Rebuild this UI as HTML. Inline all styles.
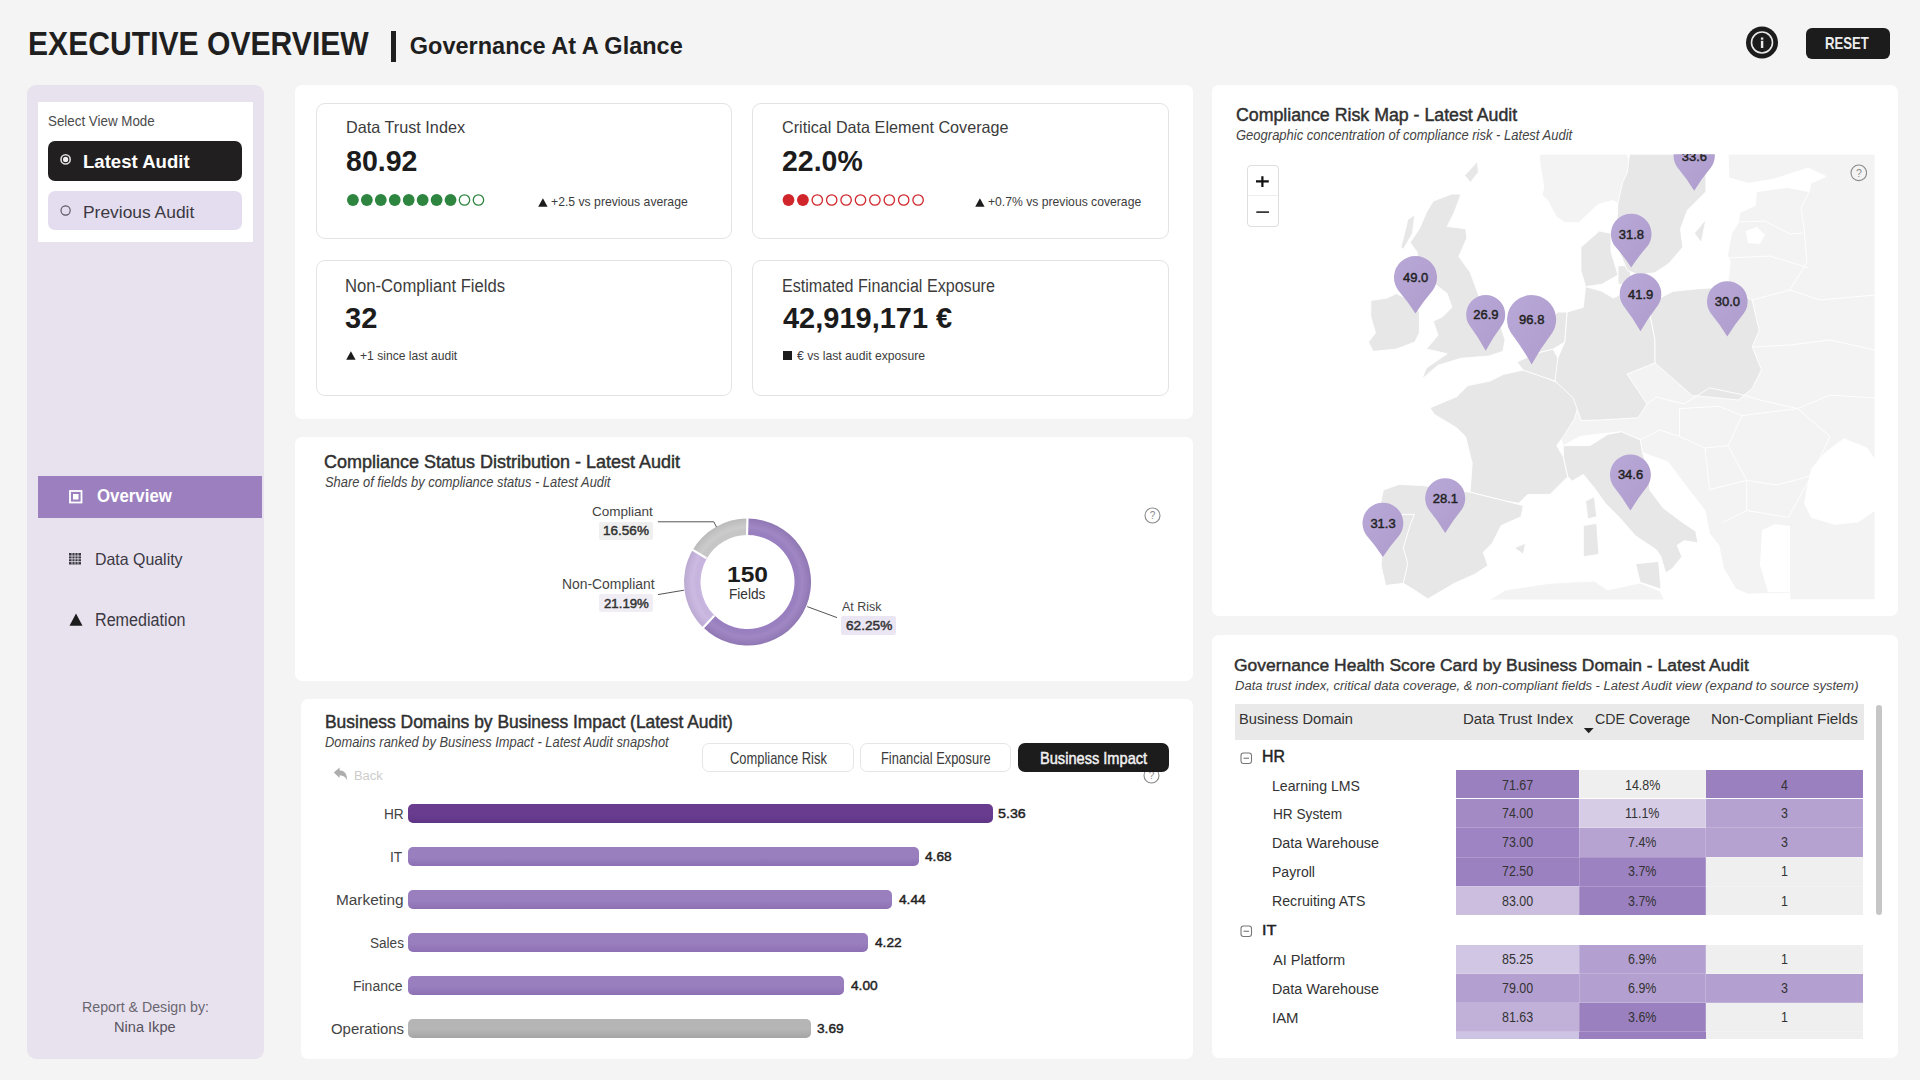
<!DOCTYPE html>
<html><head><meta charset="utf-8"><title>Executive Overview</title>
<style>
html,body{margin:0;padding:0;}
body{width:1920px;height:1080px;overflow:hidden;background:#f4f4f4;position:relative;font-family:"Liberation Sans",sans-serif;}
.b{position:absolute;}
.t{position:absolute;white-space:nowrap;}
</style></head><body>
<div class="b" style="left:27px;top:85px;width:237px;height:974px;background:#e8e2ef;border-radius:9px;"></div>
<div class="b" style="left:38px;top:102px;width:215px;height:140px;background:#ffffff;border-radius:0px;"></div>
<div class="b" style="left:48px;top:140.5px;width:194px;height:40px;background:#221f20;border-radius:7px;"></div>
<div class="b" style="left:48px;top:191px;width:194px;height:39px;background:#e4ddef;border-radius:7px;"></div>
<div class="b" style="left:38px;top:476px;width:224px;height:41.5px;background:#9b7fbf;border-radius:0px;"></div>
<div class="b" style="left:295px;top:85px;width:898px;height:334px;background:#ffffff;border-radius:7px;"></div>
<div class="b" style="left:315.5px;top:102.5px;width:416.5px;height:136.5px;background:#ffffff;border-radius:9px;border:1px solid #e3e3e3;box-sizing:border-box;"></div>
<div class="b" style="left:752px;top:102.5px;width:416.5px;height:136.5px;background:#ffffff;border-radius:9px;border:1px solid #e3e3e3;box-sizing:border-box;"></div>
<div class="b" style="left:315.5px;top:259.5px;width:416.5px;height:136.5px;background:#ffffff;border-radius:9px;border:1px solid #e3e3e3;box-sizing:border-box;"></div>
<div class="b" style="left:752px;top:259.5px;width:416.5px;height:136.5px;background:#ffffff;border-radius:9px;border:1px solid #e3e3e3;box-sizing:border-box;"></div>
<div class="b" style="left:295px;top:437px;width:898px;height:244px;background:#ffffff;border-radius:7px;"></div>
<div class="b" style="left:301px;top:699px;width:892px;height:360px;background:#ffffff;border-radius:7px;"></div>
<div class="b" style="left:1212px;top:85px;width:686px;height:531px;background:#ffffff;border-radius:7px;"></div>
<div class="b" style="left:1212px;top:635px;width:686px;height:423px;background:#ffffff;border-radius:7px;"></div>
<div class="t" style="left:28.18px;top:25px;font-size:33.0px;line-height:37px;color:#1f1f1f;font-weight:700;transform:scaleX(0.9124);transform-origin:0 0;">EXECUTIVE OVERVIEW</div>
<div class="b" style="left:391px;top:31px;width:4.5px;height:30.5px;background:#1f1f1f;border-radius:0px;"></div>
<div class="t" style="left:409.80px;top:33px;font-size:23.5px;line-height:26px;color:#1f1f1f;font-weight:700;">Governance At A Glance</div>
<svg class="b" style="left:1745px;top:26px" width="34" height="34" viewBox="0 0 34 34"><circle cx="17" cy="16.5" r="16" fill="#1c1c1c"/><circle cx="17" cy="16.5" r="10.5" fill="none" stroke="#e8e8e8" stroke-width="1.6"/><rect x="15.9" y="11.5" width="2.4" height="2.2" fill="#e8e8e8"/><rect x="15.9" y="14.8" width="2.4" height="7.2" fill="#e8e8e8"/></svg>
<div class="b" style="left:1805.5px;top:28px;width:84px;height:31px;background:#1c1c1c;border-radius:6px;"></div>
<div class="t" style="left:1824.97px;top:35px;font-size:15.75px;line-height:17px;color:#ececec;font-weight:700;transform:scaleX(0.8346);transform-origin:0 0;">RESET</div>
<div class="t" style="left:47.80px;top:113px;font-size:14.0px;line-height:16px;color:#4a4a4a;transform:scaleX(0.9545);transform-origin:0 0;">Select View Mode</div>
<svg class="b" style="left:59px;top:153px" width="14" height="14"><circle cx="6.6" cy="6.4" r="4.6" fill="#221f20" stroke="#dcdcdc" stroke-width="1.6"/><circle cx="6.6" cy="6.4" r="2.6" fill="#f0f0f0"/></svg>
<div class="t" style="left:83.42px;top:151px;font-size:19.0px;line-height:21px;color:#ffffff;font-weight:700;transform:scaleX(0.9778);transform-origin:0 0;">Latest Audit</div>
<svg class="b" style="left:59px;top:203.5px" width="14" height="14"><circle cx="6.6" cy="6.5" r="4.6" fill="none" stroke="#55505c" stroke-width="1.1"/></svg>
<div class="t" style="left:83.39px;top:202px;font-size:17.25px;line-height:20px;color:#3b3842;transform:scaleX(1.0092);transform-origin:0 0;">Previous Audit</div>
<svg class="b" style="left:69px;top:489.5px" width="14" height="14"><rect x="1" y="1" width="11.5" height="11.5" fill="none" stroke="#ffffff" stroke-width="1.8"/><rect x="4" y="4" width="5.5" height="5.5" fill="#ffffff"/></svg>
<div class="t" style="left:96.58px;top:485px;font-size:18.25px;line-height:21px;color:#ffffff;font-weight:700;transform:scaleX(0.9225);transform-origin:0 0;">Overview</div>
<svg class="b" style="left:69px;top:553px" width="13" height="12"><rect x="0" y="0" width="12" height="11.5" fill="#3a3840"/><path d="M0 3H12M0 5.8H12M0 8.6H12M3 0V11.5M6 0V11.5M9 0V11.5" stroke="#e8e2ef" stroke-width="0.8"/></svg>
<div class="t" style="left:95.24px;top:550px;font-size:16.5px;line-height:18px;color:#3b3842;transform:scaleX(0.9644);transform-origin:0 0;">Data Quality</div>
<svg class="b" style="left:68.5px;top:613px" width="14" height="13"><path d="M7 0.5L13.5 12.8H0.5Z" fill="#1c1c1c"/></svg>
<div class="t" style="left:95.28px;top:610px;font-size:17.5px;line-height:20px;color:#3b3842;transform:scaleX(0.9219);transform-origin:0 0;">Remediation</div>
<div class="t" style="left:81.89px;top:999px;font-size:14.0px;line-height:16px;color:#6a6670;transform:scaleX(1.0130);transform-origin:0 0;">Report &amp; Design by:</div>
<div class="t" style="left:113.96px;top:1019px;font-size:14.0px;line-height:16px;color:#57535d;transform:scaleX(1.0414);transform-origin:0 0;">Nina Ikpe</div>
<div class="t" style="left:345.72px;top:118px;font-size:16.5px;line-height:18px;color:#3c3c3c;transform:scaleX(0.9833);transform-origin:0 0;">Data Trust Index</div>
<div class="t" style="left:345.72px;top:145px;font-size:29.0px;line-height:32px;color:#1c1c1c;font-weight:700;transform:scaleX(0.9845);transform-origin:0 0;">80.92</div>
<svg class="b" style="left:340px;top:192.4px" width="160" height="16"><circle cx="12.90" cy="8" r="5.9" fill="#2e8540"/><circle cx="26.85" cy="8" r="5.9" fill="#2e8540"/><circle cx="40.80" cy="8" r="5.9" fill="#2e8540"/><circle cx="54.75" cy="8" r="5.9" fill="#2e8540"/><circle cx="68.70" cy="8" r="5.9" fill="#2e8540"/><circle cx="82.65" cy="8" r="5.9" fill="#2e8540"/><circle cx="96.60" cy="8" r="5.9" fill="#2e8540"/><circle cx="110.55" cy="8" r="5.9" fill="#2e8540"/><circle cx="124.50" cy="8" r="5.2" fill="none" stroke="#2e8540" stroke-width="1.3"/><circle cx="138.45" cy="8" r="5.2" fill="none" stroke="#2e8540" stroke-width="1.3"/></svg>
<svg class="b" style="left:537.5px;top:197.5px" width="10" height="9"><path d="M4.9 0.2L9.6 8.7H0.2Z" fill="#1c1c1c"/></svg>
<div class="t" style="left:550.54px;top:194px;font-size:12.75px;line-height:15px;color:#3c3c3c;transform:scaleX(0.9574);transform-origin:0 0;">+2.5 vs previous average</div>
<div class="t" style="left:781.52px;top:118px;font-size:16.5px;line-height:18px;color:#3c3c3c;transform:scaleX(0.9804);transform-origin:0 0;">Critical Data Element Coverage</div>
<div class="t" style="left:781.52px;top:145px;font-size:29.0px;line-height:32px;color:#1c1c1c;font-weight:700;transform:scaleX(0.9815);transform-origin:0 0;">22.0%</div>
<svg class="b" style="left:776px;top:192.4px" width="160" height="16"><circle cx="12.50" cy="8" r="5.9" fill="#d0262b"/><circle cx="26.90" cy="8" r="5.9" fill="#d0262b"/><circle cx="41.30" cy="8" r="5.2" fill="none" stroke="#d0262b" stroke-width="1.3"/><circle cx="55.70" cy="8" r="5.2" fill="none" stroke="#d0262b" stroke-width="1.3"/><circle cx="70.10" cy="8" r="5.2" fill="none" stroke="#d0262b" stroke-width="1.3"/><circle cx="84.50" cy="8" r="5.2" fill="none" stroke="#d0262b" stroke-width="1.3"/><circle cx="98.90" cy="8" r="5.2" fill="none" stroke="#d0262b" stroke-width="1.3"/><circle cx="113.30" cy="8" r="5.2" fill="none" stroke="#d0262b" stroke-width="1.3"/><circle cx="127.70" cy="8" r="5.2" fill="none" stroke="#d0262b" stroke-width="1.3"/><circle cx="142.10" cy="8" r="5.2" fill="none" stroke="#d0262b" stroke-width="1.3"/></svg>
<svg class="b" style="left:974.5px;top:197.5px" width="10" height="9"><path d="M4.9 0.2L9.6 8.7H0.2Z" fill="#1c1c1c"/></svg>
<div class="t" style="left:987.55px;top:194px;font-size:12.75px;line-height:15px;color:#3c3c3c;transform:scaleX(0.9541);transform-origin:0 0;">+0.7% vs previous coverage</div>
<div class="t" style="left:345.27px;top:276px;font-size:18.0px;line-height:20px;color:#3c3c3c;transform:scaleX(0.9251);transform-origin:0 0;">Non-Compliant Fields</div>
<div class="t" style="left:345.42px;top:301px;font-size:29.75px;line-height:33px;color:#1c1c1c;font-weight:700;transform:scaleX(0.9774);transform-origin:0 0;">32</div>
<svg class="b" style="left:346px;top:351px" width="10" height="9"><path d="M4.9 0.2L9.6 8.7H0.2Z" fill="#1c1c1c"/></svg>
<div class="t" style="left:359.57px;top:348px;font-size:13.0px;line-height:15px;color:#3c3c3c;transform:scaleX(0.9311);transform-origin:0 0;">+1 since last audit</div>
<div class="t" style="left:781.61px;top:276px;font-size:18.0px;line-height:20px;color:#3c3c3c;transform:scaleX(0.8941);transform-origin:0 0;">Estimated Financial Exposure</div>
<div class="t" style="left:782.50px;top:301px;font-size:29.75px;line-height:33px;color:#1c1c1c;font-weight:700;transform:scaleX(0.9740);transform-origin:0 0;">42,919,171 €</div>
<div class="b" style="left:783px;top:351px;width:8.5px;height:8.5px;background:#1c1c1c;border-radius:0px;"></div>
<div class="t" style="left:797.00px;top:348px;font-size:13.0px;line-height:15px;color:#3c3c3c;transform:scaleX(0.9375);transform-origin:0 0;">€ vs last audit exposure</div>
<div class="t" style="left:324.37px;top:452px;font-size:17.5px;line-height:20px;color:#303030;-webkit-text-stroke:0.45px #303030;transform:scaleX(1.0277);transform-origin:0 0;">Compliance Status Distribution - Latest Audit</div>
<div class="t" style="left:324.51px;top:474px;font-size:14.5px;line-height:16px;color:#444444;font-style:italic;transform:scaleX(0.8891);transform-origin:0 0;">Share of fields by compliance status - Latest Audit</div>
<svg class="b" style="left:1144.1px;top:506.79999999999995px" width="17.0" height="17.0" viewBox="0 0 17.0 17.0"><circle cx="8.5" cy="8.5" r="7.5" fill="none" stroke="#8a8a8a" stroke-width="1.1"/><text x="8.5" y="12.1" text-anchor="middle" font-family="Liberation Sans" font-size="10" fill="#8a8a8a">?</text></svg>
<svg class="b" style="left:0;top:0" width="1920" height="1080" viewBox="0 0 1920 1080"><defs><radialGradient id="dg" cx="747.5" cy="582" r="63.5" gradientUnits="userSpaceOnUse"><stop offset="0.74" stop-color="#000" stop-opacity="0"/><stop offset="0.86" stop-color="#fff" stop-opacity="0.06"/><stop offset="1" stop-color="#000" stop-opacity="0.07"/></radialGradient></defs><path d="M747.50,518.50 A63.5,63.5 0 1 1 703.31,627.60 L714.79,615.75 A47,47 0 1 0 747.50,535.00 Z" fill="#9a80c1"/><path d="M703.31,627.60 A63.5,63.5 0 0 1 692.72,549.88 L706.96,558.23 A47,47 0 0 0 714.79,615.75 Z" fill="#c9b6e1"/><path d="M692.72,549.88 A63.5,63.5 0 0 1 747.50,518.50 L747.50,535.00 A47,47 0 0 0 706.96,558.23 Z" fill="#c8c8c8"/><circle cx="747.5" cy="582" r="63.5" fill="url(#dg)"/><line x1="747.00" y1="535.00" x2="747.50" y2="517.50" stroke="#fff" stroke-width="2.2"/><line x1="714.29" y1="615.75" x2="702.61" y2="628.32" stroke="#fff" stroke-width="2.2"/><line x1="706.46" y1="558.23" x2="691.86" y2="549.38" stroke="#fff" stroke-width="2.2"/><polyline points="657.9,521.8 713.8,521.8 716.5,527" fill="none" stroke="#555" stroke-width="1"/><polyline points="657.9,594.6 684,590.2" fill="none" stroke="#555" stroke-width="1"/><polyline points="807.2,606.6 837,617.6" fill="none" stroke="#555" stroke-width="1"/></svg>
<div class="t" style="left:727.31px;top:562px;font-size:22.5px;line-height:25px;color:#1c1c1c;font-weight:700;transform:scaleX(1.0917);transform-origin:0 0;">150</div>
<div class="t" style="left:729.06px;top:586px;font-size:14.5px;line-height:16px;color:#333333;transform:scaleX(0.9405);transform-origin:0 0;">Fields</div>
<div class="t" style="left:592.36px;top:504px;font-size:13.0px;line-height:15px;color:#444444;transform:scaleX(1.0397);transform-origin:0 0;">Compliant</div>
<div class="b" style="left:599px;top:521.8px;width:54px;height:18px;background:#efefef;border-radius:2px;"></div>
<div class="t" style="left:602.94px;top:523px;font-size:12.75px;line-height:15px;color:#333333;-webkit-text-stroke:0.45px #333333;transform:scaleX(1.0619);transform-origin:0 0;">16.56%</div>
<div class="t" style="left:561.51px;top:576px;font-size:14.0px;line-height:16px;color:#444444;transform:scaleX(0.9913);transform-origin:0 0;">Non-Compliant</div>
<div class="b" style="left:599px;top:594px;width:54px;height:18.3px;background:#f0eef4;border-radius:2px;"></div>
<div class="t" style="left:604.00px;top:596px;font-size:12.75px;line-height:15px;color:#333333;-webkit-text-stroke:0.45px #333333;transform:scaleX(1.0372);transform-origin:0 0;">21.19%</div>
<div class="t" style="left:841.90px;top:599px;font-size:13.25px;line-height:15px;color:#444444;transform:scaleX(0.9405);transform-origin:0 0;">At Risk</div>
<div class="b" style="left:841px;top:616.2px;width:55px;height:18.7px;background:#ebe6f3;border-radius:2px;"></div>
<div class="t" style="left:845.50px;top:618px;font-size:12.75px;line-height:15px;color:#333333;-webkit-text-stroke:0.45px #333333;transform:scaleX(1.0698);transform-origin:0 0;">62.25%</div>
<div class="t" style="left:324.70px;top:712px;font-size:17.5px;line-height:20px;color:#303030;-webkit-text-stroke:0.45px #303030;transform:scaleX(0.9958);transform-origin:0 0;">Business Domains by Business Impact (Latest Audit)</div>
<div class="t" style="left:324.84px;top:733px;font-size:15.0px;line-height:17px;color:#444444;font-style:italic;transform:scaleX(0.8580);transform-origin:0 0;">Domains ranked by Business Impact - Latest Audit snapshot</div>
<svg class="b" style="left:333px;top:766.5px" width="16" height="15" viewBox="0 0 16 15"><path d="M0.8 5.6 L6.6 0.4 V3.2 Q14.2 3.4 14.2 13.6 Q12.4 8.4 6.6 8.2 V11Z" fill="#adadad"/></svg>
<div class="t" style="left:354.22px;top:769px;font-size:12.0px;line-height:14px;color:#cccccc;transform:scaleX(1.0769);transform-origin:0 0;">Back</div>
<svg class="b" style="left:1143.2px;top:766.9px" width="17.0" height="17.0" viewBox="0 0 17.0 17.0"><circle cx="8.5" cy="8.5" r="7.5" fill="none" stroke="#8a8a8a" stroke-width="1.1"/><text x="8.5" y="12.1" text-anchor="middle" font-family="Liberation Sans" font-size="10" fill="#8a8a8a">?</text></svg>
<div class="b" style="left:702px;top:743px;width:151.6px;height:28.6px;background:#ffffff;border-radius:7px;border:1px solid #e6e6e6;box-sizing:border-box;"></div>
<div class="b" style="left:859.7px;top:743px;width:151.5px;height:28.6px;background:#ffffff;border-radius:7px;border:1px solid #e6e6e6;box-sizing:border-box;"></div>
<div class="b" style="left:1017.8px;top:743px;width:151.6px;height:28.6px;background:#1c1c1c;border-radius:7px;"></div>
<div class="t" style="left:729.58px;top:750px;font-size:15.75px;line-height:17px;color:#3a3a3a;transform:scaleX(0.8197);transform-origin:0 0;">Compliance Risk</div>
<div class="t" style="left:881.18px;top:750px;font-size:15.75px;line-height:17px;color:#3a3a3a;transform:scaleX(0.8182);transform-origin:0 0;">Financial Exposure</div>
<div class="t" style="left:1039.57px;top:750px;font-size:15.75px;line-height:17px;color:#f2f2f2;-webkit-text-stroke:0.45px #f2f2f2;transform:scaleX(0.9270);transform-origin:0 0;">Business Impact</div>
<div class="b" style="left:407.8px;top:804.2px;width:585.0px;height:18.6px;border-radius:5px;background:linear-gradient(180deg,#693c90 0%,#693c90 55%,#5f3585 100%);"></div>
<div class="t" style="left:383.52px;top:805px;font-size:15.5px;line-height:17px;color:#444444;transform:scaleX(0.8810);transform-origin:0 0;">HR</div>
<div class="t" style="left:998.39px;top:806px;font-size:13.5px;line-height:15px;color:#222222;-webkit-text-stroke:0.45px #222222;transform:scaleX(1.0560);transform-origin:0 0;">5.36</div>
<div class="b" style="left:407.8px;top:847.2px;width:510.8px;height:18.6px;border-radius:5px;background:linear-gradient(180deg,#9a7fbf 0%,#9a7fbf 55%,#8c70b3 100%);"></div>
<div class="t" style="left:390.41px;top:848px;font-size:15.5px;line-height:17px;color:#444444;transform:scaleX(0.8923);transform-origin:0 0;">IT</div>
<div class="t" style="left:925.22px;top:849px;font-size:13.5px;line-height:15px;color:#222222;-webkit-text-stroke:0.45px #222222;transform:scaleX(1.0154);transform-origin:0 0;">4.68</div>
<div class="b" style="left:407.8px;top:890.2px;width:484.6px;height:18.6px;border-radius:5px;background:linear-gradient(180deg,#9a7fbf 0%,#9a7fbf 55%,#8c70b3 100%);"></div>
<div class="t" style="left:336.41px;top:891px;font-size:15.5px;line-height:17px;color:#444444;transform:scaleX(0.9924);transform-origin:0 0;">Marketing</div>
<div class="t" style="left:899.03px;top:892px;font-size:13.5px;line-height:15px;color:#222222;-webkit-text-stroke:0.45px #222222;transform:scaleX(1.0154);transform-origin:0 0;">4.44</div>
<div class="b" style="left:407.8px;top:933.2px;width:460.6px;height:18.6px;border-radius:5px;background:linear-gradient(180deg,#9a7fbf 0%,#9a7fbf 55%,#8c70b3 100%);"></div>
<div class="t" style="left:369.62px;top:934px;font-size:15.5px;line-height:17px;color:#444444;transform:scaleX(0.8757);transform-origin:0 0;">Sales</div>
<div class="t" style="left:875.01px;top:935px;font-size:13.5px;line-height:15px;color:#222222;-webkit-text-stroke:0.45px #222222;transform:scaleX(1.0154);transform-origin:0 0;">4.22</div>
<div class="b" style="left:407.8px;top:976.2px;width:436.6px;height:18.6px;border-radius:5px;background:linear-gradient(180deg,#9a7fbf 0%,#9a7fbf 55%,#8c70b3 100%);"></div>
<div class="t" style="left:353.40px;top:977px;font-size:15.5px;line-height:17px;color:#444444;transform:scaleX(0.9000);transform-origin:0 0;">Finance</div>
<div class="t" style="left:851.00px;top:978px;font-size:13.5px;line-height:15px;color:#222222;-webkit-text-stroke:0.45px #222222;transform:scaleX(1.0154);transform-origin:0 0;">4.00</div>
<div class="b" style="left:407.8px;top:1019.2px;width:402.8px;height:18.6px;border-radius:5px;background:linear-gradient(180deg,#b5b5b5 0%,#b5b5b5 55%,#a5a5a5 100%);"></div>
<div class="t" style="left:330.64px;top:1020px;font-size:15.5px;line-height:17px;color:#444444;transform:scaleX(0.9635);transform-origin:0 0;">Operations</div>
<div class="t" style="left:817.16px;top:1021px;font-size:13.5px;line-height:15px;color:#222222;-webkit-text-stroke:0.45px #222222;transform:scaleX(1.0154);transform-origin:0 0;">3.69</div>
<div class="t" style="left:1234.26px;top:656px;font-size:16.75px;line-height:19px;color:#303030;-webkit-text-stroke:0.45px #303030;transform:scaleX(1.0434);transform-origin:0 0;">Governance Health Score Card by Business Domain - Latest Audit</div>
<div class="t" style="left:1235.30px;top:678px;font-size:13.25px;line-height:15px;color:#444444;font-style:italic;transform:scaleX(0.9830);transform-origin:0 0;">Data trust index, critical data coverage, &amp; non-compliant fields - Latest Audit view (expand to source system)</div>
<div class="b" style="left:1234.8px;top:703.9px;width:629px;height:36.6px;background:#e9e9e9;border-radius:0px;"></div>
<div class="t" style="left:1239.06px;top:710px;font-size:15.5px;line-height:17px;color:#333333;transform:scaleX(0.9445);transform-origin:0 0;">Business Domain</div>
<div class="t" style="left:1462.63px;top:710px;font-size:15.5px;line-height:17px;color:#333333;transform:scaleX(0.9688);transform-origin:0 0;">Data Trust Index</div>
<div class="t" style="left:1594.79px;top:710px;font-size:15.5px;line-height:17px;color:#333333;transform:scaleX(0.9136);transform-origin:0 0;">CDE Coverage</div>
<div class="t" style="left:1710.81px;top:710px;font-size:15.5px;line-height:17px;color:#333333;transform:scaleX(0.9851);transform-origin:0 0;">Non-Compliant Fields</div>
<svg class="b" style="left:1583px;top:727px" width="12" height="8"><path d="M0.8 1 H10.6 L5.7 6.2Z" fill="#222"/></svg>
<div class="b" style="left:1876px;top:705.4px;width:6px;height:209.7px;background:#c6c6c6;border-radius:3px;"></div>
<svg class="b" style="left:1240px;top:751.5px" width="13" height="13"><rect x="1" y="1" width="10.5" height="10.5" rx="2.5" fill="none" stroke="#777" stroke-width="1.1"/><path d="M3.5 6.25H9" stroke="#777" stroke-width="1.1"/></svg>
<div class="t" style="left:1261.81px;top:748px;font-size:16.0px;line-height:17px;color:#222222;-webkit-text-stroke:0.45px #222222;transform:scaleX(0.9905);transform-origin:0 0;">HR</div>
<svg class="b" style="left:1240px;top:924.8px" width="13" height="13"><rect x="1" y="1" width="10.5" height="10.5" rx="2.5" fill="none" stroke="#777" stroke-width="1.1"/><path d="M3.5 6.25H9" stroke="#777" stroke-width="1.1"/></svg>
<div class="t" style="left:1261.75px;top:921px;font-size:15.5px;line-height:17px;color:#222222;-webkit-text-stroke:0.45px #222222;transform:scaleX(1.0538);transform-origin:0 0;">IT</div>
<div class="b" style="left:1455.7px;top:770.3px;width:123.5px;height:28.2px;background:#9b80c0;border-radius:0px;"></div>
<div class="b" style="left:1579.2px;top:770.3px;width:126.4px;height:28.2px;background:#efefef;border-radius:0px;"></div>
<div class="b" style="left:1705.6px;top:770.3px;width:157.4px;height:28.2px;background:#9b80c0;border-radius:0px;"></div>
<div class="t" style="left:1272.49px;top:777px;font-size:15.5px;line-height:17px;color:#333333;transform:scaleX(0.9116);transform-origin:0 0;">Learning LMS</div>
<div class="t" style="left:1501.73px;top:777px;font-size:14.0px;line-height:16px;color:#333333;transform:scaleX(0.8900);transform-origin:0 0;">71.67</div>
<div class="t" style="left:1624.90px;top:777px;font-size:14.0px;line-height:16px;color:#333333;transform:scaleX(0.8900);transform-origin:0 0;">14.8%</div>
<div class="t" style="left:1781.04px;top:777px;font-size:14.0px;line-height:16px;color:#333333;transform:scaleX(0.8900);transform-origin:0 0;">4</div>
<div class="b" style="left:1455.7px;top:798.5px;width:123.5px;height:29.1px;background:#a48ac5;border-radius:0px;"></div>
<div class="b" style="left:1579.2px;top:798.5px;width:126.4px;height:29.1px;background:#d6cce5;border-radius:0px;"></div>
<div class="b" style="left:1705.6px;top:798.5px;width:157.4px;height:29.1px;background:#b5a2d1;border-radius:0px;"></div>
<div class="t" style="left:1272.52px;top:805px;font-size:15.5px;line-height:17px;color:#333333;transform:scaleX(0.8805);transform-origin:0 0;">HR System</div>
<div class="t" style="left:1501.73px;top:805px;font-size:14.0px;line-height:16px;color:#333333;transform:scaleX(0.8900);transform-origin:0 0;">74.00</div>
<div class="t" style="left:1625.35px;top:805px;font-size:14.0px;line-height:16px;color:#333333;transform:scaleX(0.8900);transform-origin:0 0;">11.1%</div>
<div class="t" style="left:1781.04px;top:805px;font-size:14.0px;line-height:16px;color:#333333;transform:scaleX(0.8900);transform-origin:0 0;">3</div>
<div class="b" style="left:1455.7px;top:827.6px;width:123.5px;height:29.4px;background:#9e84c2;border-radius:0px;"></div>
<div class="b" style="left:1579.2px;top:827.6px;width:126.4px;height:29.4px;background:#b6a3d2;border-radius:0px;"></div>
<div class="b" style="left:1705.6px;top:827.6px;width:157.4px;height:29.4px;background:#b5a2d1;border-radius:0px;"></div>
<div class="t" style="left:1272.48px;top:834px;font-size:15.5px;line-height:17px;color:#333333;transform:scaleX(0.9246);transform-origin:0 0;">Data Warehouse</div>
<div class="t" style="left:1501.73px;top:834px;font-size:14.0px;line-height:16px;color:#333333;transform:scaleX(0.8900);transform-origin:0 0;">73.00</div>
<div class="t" style="left:1628.01px;top:834px;font-size:14.0px;line-height:16px;color:#333333;transform:scaleX(0.8900);transform-origin:0 0;">7.4%</div>
<div class="t" style="left:1781.04px;top:834px;font-size:14.0px;line-height:16px;color:#333333;transform:scaleX(0.8900);transform-origin:0 0;">3</div>
<div class="b" style="left:1455.7px;top:857px;width:123.5px;height:29px;background:#9c81c0;border-radius:0px;"></div>
<div class="b" style="left:1579.2px;top:857px;width:126.4px;height:29px;background:#9d82c1;border-radius:0px;"></div>
<div class="b" style="left:1705.6px;top:857px;width:157.4px;height:29px;background:#efefef;border-radius:0px;"></div>
<div class="t" style="left:1272.49px;top:863px;font-size:15.5px;line-height:17px;color:#333333;transform:scaleX(0.9065);transform-origin:0 0;">Payroll</div>
<div class="t" style="left:1501.73px;top:863px;font-size:14.0px;line-height:16px;color:#333333;transform:scaleX(0.8900);transform-origin:0 0;">72.50</div>
<div class="t" style="left:1628.01px;top:863px;font-size:14.0px;line-height:16px;color:#333333;transform:scaleX(0.8900);transform-origin:0 0;">3.7%</div>
<div class="t" style="left:1781.04px;top:863px;font-size:14.0px;line-height:16px;color:#333333;transform:scaleX(0.8900);transform-origin:0 0;">1</div>
<div class="b" style="left:1455.7px;top:886px;width:123.5px;height:29.1px;background:#cbbedf;border-radius:0px;"></div>
<div class="b" style="left:1579.2px;top:886px;width:126.4px;height:29.1px;background:#9b80c0;border-radius:0px;"></div>
<div class="b" style="left:1705.6px;top:886px;width:157.4px;height:29.1px;background:#efefef;border-radius:0px;"></div>
<div class="t" style="left:1272.49px;top:892px;font-size:15.5px;line-height:17px;color:#333333;transform:scaleX(0.9129);transform-origin:0 0;">Recruiting ATS</div>
<div class="t" style="left:1501.73px;top:893px;font-size:14.0px;line-height:16px;color:#333333;transform:scaleX(0.8900);transform-origin:0 0;">83.00</div>
<div class="t" style="left:1628.01px;top:893px;font-size:14.0px;line-height:16px;color:#333333;transform:scaleX(0.8900);transform-origin:0 0;">3.7%</div>
<div class="t" style="left:1781.04px;top:893px;font-size:14.0px;line-height:16px;color:#333333;transform:scaleX(0.8900);transform-origin:0 0;">1</div>
<div class="b" style="left:1455.7px;top:944.9px;width:123.5px;height:28.9px;background:#d1c6e3;border-radius:0px;"></div>
<div class="b" style="left:1579.2px;top:944.9px;width:126.4px;height:28.9px;background:#b3a0d0;border-radius:0px;"></div>
<div class="b" style="left:1705.6px;top:944.9px;width:157.4px;height:28.9px;background:#efefef;border-radius:0px;"></div>
<div class="t" style="left:1273.40px;top:951px;font-size:15.5px;line-height:17px;color:#333333;transform:scaleX(0.9421);transform-origin:0 0;">AI Platform</div>
<div class="t" style="left:1501.73px;top:951px;font-size:14.0px;line-height:16px;color:#333333;transform:scaleX(0.8900);transform-origin:0 0;">85.25</div>
<div class="t" style="left:1628.01px;top:951px;font-size:14.0px;line-height:16px;color:#333333;transform:scaleX(0.8900);transform-origin:0 0;">6.9%</div>
<div class="t" style="left:1781.04px;top:951px;font-size:14.0px;line-height:16px;color:#333333;transform:scaleX(0.8900);transform-origin:0 0;">1</div>
<div class="b" style="left:1455.7px;top:973.8px;width:123.5px;height:29.0px;background:#b3a0d0;border-radius:0px;"></div>
<div class="b" style="left:1579.2px;top:973.8px;width:126.4px;height:29.0px;background:#b3a0d0;border-radius:0px;"></div>
<div class="b" style="left:1705.6px;top:973.8px;width:157.4px;height:29.0px;background:#b3a0d0;border-radius:0px;"></div>
<div class="t" style="left:1272.48px;top:980px;font-size:15.5px;line-height:17px;color:#333333;transform:scaleX(0.9246);transform-origin:0 0;">Data Warehouse</div>
<div class="t" style="left:1501.73px;top:980px;font-size:14.0px;line-height:16px;color:#333333;transform:scaleX(0.8900);transform-origin:0 0;">79.00</div>
<div class="t" style="left:1628.01px;top:980px;font-size:14.0px;line-height:16px;color:#333333;transform:scaleX(0.8900);transform-origin:0 0;">6.9%</div>
<div class="t" style="left:1781.04px;top:980px;font-size:14.0px;line-height:16px;color:#333333;transform:scaleX(0.8900);transform-origin:0 0;">3</div>
<div class="b" style="left:1455.7px;top:1002.8px;width:123.5px;height:28.8px;background:#c1b1d9;border-radius:0px;"></div>
<div class="b" style="left:1579.2px;top:1002.8px;width:126.4px;height:28.8px;background:#9b80c0;border-radius:0px;"></div>
<div class="b" style="left:1705.6px;top:1002.8px;width:157.4px;height:28.8px;background:#efefef;border-radius:0px;"></div>
<div class="t" style="left:1272.44px;top:1009px;font-size:15.5px;line-height:17px;color:#333333;transform:scaleX(0.9615);transform-origin:0 0;">IAM</div>
<div class="t" style="left:1501.73px;top:1009px;font-size:14.0px;line-height:16px;color:#333333;transform:scaleX(0.8900);transform-origin:0 0;">81.63</div>
<div class="t" style="left:1628.01px;top:1009px;font-size:14.0px;line-height:16px;color:#333333;transform:scaleX(0.8900);transform-origin:0 0;">3.6%</div>
<div class="t" style="left:1781.04px;top:1009px;font-size:14.0px;line-height:16px;color:#333333;transform:scaleX(0.8900);transform-origin:0 0;">1</div>
<div class="b" style="left:1455.7px;top:798.0px;width:407.3px;height:1px;background:rgba(255,255,255,0.18);border-radius:0px;"></div>
<div class="b" style="left:1455.7px;top:827.1px;width:407.3px;height:1px;background:rgba(255,255,255,0.18);border-radius:0px;"></div>
<div class="b" style="left:1455.7px;top:856.5px;width:407.3px;height:1px;background:rgba(255,255,255,0.18);border-radius:0px;"></div>
<div class="b" style="left:1455.7px;top:885.5px;width:407.3px;height:1px;background:rgba(255,255,255,0.18);border-radius:0px;"></div>
<div class="b" style="left:1455.7px;top:973.3px;width:407.3px;height:1px;background:rgba(255,255,255,0.18);border-radius:0px;"></div>
<div class="b" style="left:1455.7px;top:1002.3px;width:407.3px;height:1px;background:rgba(255,255,255,0.18);border-radius:0px;"></div>
<div class="b" style="left:1455.7px;top:1031.1px;width:407.3px;height:1px;background:rgba(255,255,255,0.18);border-radius:0px;"></div>
<div class="b" style="left:1578.7px;top:770.3px;width:1px;height:144.8px;background:rgba(255,255,255,0.18);border-radius:0px;"></div>
<div class="b" style="left:1578.7px;top:944.9px;width:1px;height:94px;background:rgba(255,255,255,0.18);border-radius:0px;"></div>
<div class="b" style="left:1705.1px;top:770.3px;width:1px;height:144.8px;background:rgba(255,255,255,0.18);border-radius:0px;"></div>
<div class="b" style="left:1705.1px;top:944.9px;width:1px;height:94px;background:rgba(255,255,255,0.18);border-radius:0px;"></div>
<div class="b" style="left:1455.7px;top:1031.6px;width:123.5px;height:7.2px;background:#cdc3e2;border-radius:0px;"></div>
<div class="b" style="left:1579.2px;top:1031.6px;width:126.4px;height:7.2px;background:#9b80c0;border-radius:0px;"></div>
<div class="b" style="left:1705.6px;top:1031.6px;width:157.4px;height:7.2px;background:#efefef;border-radius:0px;"></div>
<div class="t" style="left:1235.59px;top:105px;font-size:17.5px;line-height:20px;color:#303030;-webkit-text-stroke:0.45px #303030;transform:scaleX(1.0145);transform-origin:0 0;">Compliance Risk Map - Latest Audit</div>
<div class="t" style="left:1235.70px;top:127px;font-size:14.5px;line-height:16px;color:#444444;font-style:italic;transform:scaleX(0.8965);transform-origin:0 0;">Geographic concentration of compliance risk - Latest Audit</div>
<svg class="b" style="left:0;top:0" width="1920" height="1080" viewBox="0 0 1920 1080"><defs><clipPath id="mc"><rect x="1236" y="154.2" width="639" height="445.4"/></clipPath><linearGradient id="pg" x1="0" y1="0" x2="1" y2="1"><stop offset="0" stop-color="#b8a8d7"/><stop offset="1" stop-color="#ae9ccd"/></linearGradient></defs><g clip-path="url(#mc)"><polygon points="1539.3,154.2 1626.8,154.2 1630.7,162.8 1630.7,174.4 1624.3,180.9 1622.3,191.3 1619.7,204.3 1612.6,200.4 1598.3,204.3 1578.9,222.4 1564.6,222.4 1556.2,216.6 1547.8,200.4 1542.0,195.2 1543.9,187.4 1540.0,163.4" fill="#f3f3f3" stroke="#fff" stroke-width="0.8"/><polygon points="1556.7,425.6 1575.0,405.0 1600.0,385.0 1627.0,372.0 1655.0,363.0 1655.0,300.0 1692.0,289.0 1727.5,288.9 1730.3,261.1 1727.5,255.6 1731.7,233.3 1738.6,222.2 1740.0,212.5 1755.3,205.6 1756.7,191.7 1787.2,187.5 1809.4,191.7 1810.8,183.3 1826.1,176.4 1808.0,168.0 1773.3,179.2 1748.3,183.3 1728.9,177.8 1728.2,154.2 1875.0,154.2 1875.0,459.5 1867.0,448.0 1843.9,438.7 1825.4,452.6 1811.5,468.8 1806.9,489.6 1804.5,503.5 1811.5,517.4 1834.6,524.4 1857.8,522.0 1875.0,510.5 1875.0,599.6 1790.0,599.6 1790.0,593.0 1748.0,594.0 1736.0,589.0 1723.5,568.3 1718.9,545.2 1709.6,533.6 1705.0,510.5 1688.8,489.6 1668.0,461.9 1642.5,452.6 1640.2,439.9 1621.7,431.8 1598.5,434.1 1580.0,436.4 1563.3,445.6" fill="#f3f3f3" stroke="#fff" stroke-width="0.8"/><polygon points="1487.8,601.0 1505.6,590.0 1550.0,583.3 1594.4,581.1 1607.8,590.0 1640.0,583.0 1660.0,591.0 1665.0,601.0" fill="#f3f3f3" stroke="#fff" stroke-width="0.8"/><polygon points="1762,530 1775,524 1790,526 1790,592 1768,592 1760,565" fill="#fff"/><polygon points="1745.6,231 1757,227 1765,235 1760,244 1748,243" fill="#fff"/><polygon points="1451.9,194.0 1461.1,194.0 1454.2,212.5 1447.2,226.4 1465.7,228.7 1466.9,238.0 1458.8,256.5 1470.4,272.7 1479.6,298.1 1488.9,312.0 1500.5,325.9 1505.1,339.8 1502.8,351.4 1488.9,356.0 1461.1,358.3 1438.0,365.3 1421.8,379.2 1426.4,368.0 1447.2,353.7 1426.4,349.1 1438.0,335.2 1433.3,321.3 1442.6,316.7 1451.9,307.4 1447.2,293.5 1438.0,286.6 1419.4,270.4 1417.1,251.9 1410.2,242.6 1419.4,228.7 1426.4,212.5 1433.3,200.9" fill="#e7e7e7" stroke="#fff" stroke-width="0.9"/><polygon points="1477.3,161.6 1478.5,172.0 1470.4,182.4 1464.6,175.5" fill="#e7e7e7" stroke="#fff" stroke-width="0.9"/><polygon points="1400.9,247.2 1407.9,219.4 1414.8,214.8 1412.5,233.3 1403.2,249.5" fill="#e7e7e7" stroke="#fff" stroke-width="0.9"/><polygon points="1370.8,300.5 1387.0,298.1 1396.3,293.5 1405.6,298.1 1419.4,312.0 1419.4,332.9 1414.8,342.1 1396.3,349.1 1373.1,351.4 1368.5,342.1 1375.5,332.9 1370.8,316.7" fill="#e7e7e7" stroke="#fff" stroke-width="0.9"/><polygon points="1430.0,407.8 1456.7,396.7 1467.8,385.6 1490.0,381.1 1503.3,374.4 1523.3,370.0 1543.3,376.7 1558.9,383.3 1581.1,396.7 1574.4,418.9 1563.3,436.7 1556.7,445.6 1563.3,456.7 1567.8,476.7 1550.0,494.4 1527.8,494.4 1518.9,503.3 1505.6,501.1 1470.0,492.2 1472.2,463.3 1465.6,436.7 1456.7,427.8 1434.4,414.4" fill="#e7e7e7" stroke="#fff" stroke-width="0.9"/><polygon points="1383.3,490.0 1398.9,484.4 1423.3,485.6 1470.0,492.2 1505.6,501.1 1523.3,505.6 1521.1,516.7 1501.1,525.6 1492.2,543.3 1483.3,552.2 1487.8,565.6 1474.4,574.4 1454.4,583.3 1427.8,598.9 1414.4,590.0 1403.3,583.3 1385.6,585.6 1381.1,565.6 1383.3,543.3 1374.4,514.4 1381.1,501.1" fill="#e7e7e7" stroke="#fff" stroke-width="0.9"/><polygon points="1514.4,547.8 1525.6,543.3 1523.3,554.4" fill="#e7e7e7" stroke="#fff" stroke-width="0.9"/><polygon points="1563.3,445.6 1590.0,445.6 1607.8,434.4 1621.7,431.8 1640.2,439.9 1642.5,452.6 1649.4,475.7 1649.4,489.6 1663.3,508.1 1681.9,522.0 1695.7,531.3 1698.1,542.9 1684.2,540.6 1677.2,545.2 1681.9,556.8 1672.6,568.3 1665.6,573.0 1661.0,556.8 1656.4,549.8 1635.6,535.9 1619.4,517.4 1605.5,503.5 1593.9,487.3 1583.3,474.4 1572.2,481.1 1567.8,476.7 1563.3,456.7" fill="#e7e7e7" stroke="#fff" stroke-width="0.9"/><polygon points="1635.6,563.7 1658.7,561.4 1661.0,589.2 1640.2,582.2" fill="#e7e7e7" stroke="#fff" stroke-width="0.9"/><polygon points="1585.6,501.1 1594.4,496.7 1596.7,516.7 1587.8,518.9" fill="#e7e7e7" stroke="#fff" stroke-width="0.9"/><polygon points="1583.3,525.6 1596.7,523.3 1598.9,554.4 1583.3,556.7" fill="#e7e7e7" stroke="#fff" stroke-width="0.9"/><polygon points="1585.6,286.6 1601.8,291.2 1613.3,298.1 1622.6,293.5 1638.8,298.1 1650.4,307.4 1650.4,316.7 1655.0,339.8 1655.0,363.0 1627.0,374.0 1647.0,404.0 1638.1,417.8 1600.0,420.0 1581.1,420.6 1573.4,398.1 1555.0,381.0 1553.0,370.0 1557.8,358.0 1564.7,342.1 1567.0,312.0 1583.2,307.4" fill="#e7e7e7" stroke="#fff" stroke-width="0.9"/><polygon points="1535.0,353.7 1540.0,330.0 1557.8,312.0 1567.0,312.0 1564.7,342.1 1553.1,349.1" fill="#e7e7e7" stroke="#fff" stroke-width="0.9"/><polygon points="1517.0,362.0 1535.0,353.7 1553.1,349.1 1557.8,358.0 1555.0,381.0 1543.0,377.0 1523.0,370.0" fill="#e7e7e7" stroke="#fff" stroke-width="0.9"/><polygon points="1659.6,298.1 1673.5,291.2 1696.7,288.9 1729.1,286.6 1752.2,300.5 1759.2,330.6 1752.2,346.8 1761.5,369.9 1752.2,388.4 1738.3,400.0 1692.0,395.4 1673.5,379.2 1655.0,363.0 1655.0,339.8 1650.4,316.7 1650.4,307.4" fill="#e7e7e7" stroke="#fff" stroke-width="0.9"/><polygon points="1580.9,247.2 1599.4,231.0 1611.0,233.3 1611.0,251.9 1618.0,275.0 1601.8,284.3 1585.6,286.6 1580.9,270.4" fill="#e7e7e7" stroke="#fff" stroke-width="0.9"/><polygon points="1618.0,265.7 1629.5,265.7 1631.9,284.3 1618.0,284.3" fill="#e7e7e7" stroke="#fff" stroke-width="0.9"/><polygon points="1629.5,154.2 1715.2,154.2 1705.9,173.1 1705.9,191.7 1687.4,210.2 1680.5,228.7 1682.8,247.2 1668.9,263.4 1655.0,272.7 1638.8,275.0 1627.2,270.4 1615.6,242.6 1618.0,203.2 1622.6,182.4 1627.2,173.1" fill="#e7e7e7" stroke="#fff" stroke-width="0.9"/><polygon points="1694.4,233.3 1705.9,219.4 1701.3,242.6" fill="#e7e7e7" stroke="#fff" stroke-width="0.9"/><polyline points="1383.3,514.4 1414.4,514.4 1410,525.6 1403.3,547.8 1407.8,563.3 1403.3,583.3" fill="none" stroke="#fff" stroke-width="1"/><polyline points="1647.0,404.0 1656.4,397.0 1684.2,404.0 1709.6,387.8 1742.0,394.7" fill="none" stroke="#fff" stroke-width="0.9"/><polyline points="1640.0,440.0 1660.0,430.0 1679.5,436.4 1705.0,448.0 1728.1,445.6 1742.0,415.6 1718.9,406.3 1679.5,408.6 1679.5,436.4" fill="none" stroke="#fff" stroke-width="0.9"/><polyline points="1742.0,415.6 1797.6,408.6 1830.0,436.4 1811.5,475.7 1776.8,485.0 1746.7,480.4 1728.1,445.6" fill="none" stroke="#fff" stroke-width="0.9"/><polyline points="1705.0,448.0 1709.6,489.6 1746.7,480.4" fill="none" stroke="#fff" stroke-width="0.9"/><polyline points="1746.7,480.4 1746.7,510.5 1788.3,517.4 1811.5,475.7" fill="none" stroke="#fff" stroke-width="0.9"/><polyline points="1723.5,522.0 1746.7,510.5" fill="none" stroke="#fff" stroke-width="0.9"/><polyline points="1742.0,394.7 1760.0,400.0 1797.6,408.6 1830.0,395.0 1875.0,398.0" fill="none" stroke="#fff" stroke-width="0.9"/><polyline points="1752.0,300.0 1790.0,290.0 1820.0,300.0 1875.0,295.0" fill="none" stroke="#fff" stroke-width="0.9"/><polyline points="1752.0,347.0 1790.0,345.0 1830.0,340.0 1875.0,350.0" fill="none" stroke="#fff" stroke-width="0.9"/><polyline points="1740.0,222.0 1765.0,221.0 1790.0,234.0 1803.0,233.0" fill="none" stroke="#fff" stroke-width="0.9"/><polyline points="1728.0,258.0 1770.0,256.0 1790.0,262.0 1808.0,268.0" fill="none" stroke="#fff" stroke-width="0.9"/><polyline points="1809.0,192.0 1801.0,208.0 1804.0,228.0 1807.0,262.0 1790.0,290.0" fill="none" stroke="#fff" stroke-width="0.9"/><path d="M1677.47,167.52 A20.6,20.6 0 1 1 1710.93,167.52 Q1701.23,179.16 1694.20,190.80 Q1687.17,179.16 1677.47,167.52Z" fill="url(#pg)"/><path d="M1615.02,246.26 A20.3,20.3 0 1 1 1647.38,246.26 Q1637.99,256.93 1631.20,267.60 Q1624.41,256.93 1615.02,246.26Z" fill="url(#pg)"/><path d="M1398.20,290.17 A21.5,21.5 0 1 1 1432.80,290.17 Q1422.76,301.88 1415.50,313.60 Q1408.24,301.88 1398.20,290.17Z" fill="url(#pg)"/><path d="M1469.25,324.98 A19.5,19.5 0 1 1 1502.15,324.98 Q1492.61,337.89 1485.70,350.80 Q1478.79,337.89 1469.25,324.98Z" fill="url(#pg)"/><path d="M1623.23,305.60 A20.8,20.8 0 1 1 1657.77,305.60 Q1647.75,318.45 1640.50,331.30 Q1633.25,318.45 1623.23,305.60Z" fill="url(#pg)"/><path d="M1710.74,313.24 A20.3,20.3 0 1 1 1743.86,313.24 Q1734.26,324.92 1727.30,336.60 Q1720.34,324.92 1710.74,313.24Z" fill="url(#pg)"/><path d="M1511.07,332.97 A24.5,24.5 0 1 1 1552.13,332.97 Q1540.22,348.73 1531.60,364.50 Q1522.98,348.73 1511.07,332.97Z" fill="url(#pg)"/><path d="M1613.64,486.42 A20.4,20.4 0 1 1 1647.16,486.42 Q1637.44,498.51 1630.40,510.60 Q1623.36,498.51 1613.64,486.42Z" fill="url(#pg)"/><path d="M1428.83,509.79 A20,20 0 1 1 1461.57,509.79 Q1452.07,521.45 1445.20,533.10 Q1438.33,521.45 1428.83,509.79Z" fill="url(#pg)"/><path d="M1366.61,535.38 A20.4,20.4 0 1 1 1399.19,535.38 Q1389.74,546.19 1382.90,557.00 Q1376.06,546.19 1366.61,535.38Z" fill="url(#pg)"/></g></svg>
<div class="t" style="left:1618.70px;top:227px;font-size:13.0px;line-height:15px;color:#222222;-webkit-text-stroke:0.45px #222222;">31.8</div>
<div class="t" style="left:1403.00px;top:270px;font-size:13.0px;line-height:15px;color:#222222;-webkit-text-stroke:0.45px #222222;">49.0</div>
<div class="t" style="left:1473.20px;top:307px;font-size:13.0px;line-height:15px;color:#222222;-webkit-text-stroke:0.45px #222222;">26.9</div>
<div class="t" style="left:1628.00px;top:287px;font-size:13.0px;line-height:15px;color:#222222;-webkit-text-stroke:0.45px #222222;">41.9</div>
<div class="t" style="left:1714.80px;top:294px;font-size:13.0px;line-height:15px;color:#222222;-webkit-text-stroke:0.45px #222222;">30.0</div>
<div class="t" style="left:1519.10px;top:312px;font-size:13.0px;line-height:15px;color:#222222;-webkit-text-stroke:0.45px #222222;">96.8</div>
<div class="t" style="left:1617.90px;top:467px;font-size:13.0px;line-height:15px;color:#222222;-webkit-text-stroke:0.45px #222222;">34.6</div>
<div class="t" style="left:1432.70px;top:491px;font-size:13.0px;line-height:15px;color:#222222;-webkit-text-stroke:0.45px #222222;">28.1</div>
<div class="t" style="left:1370.40px;top:516px;font-size:13.0px;line-height:15px;color:#222222;-webkit-text-stroke:0.45px #222222;">31.3</div>
<div class="t" style="left:1681.70px;top:149px;font-size:13.0px;line-height:15px;color:#222222;-webkit-text-stroke:0.45px #222222;clip-path:inset(5px 0 0 0);">33.6</div>
<div class="b" style="left:1246.5px;top:165px;width:32px;height:62.4px;background:#fff;border:1px solid #dedede;border-radius:4px;box-sizing:border-box;"></div>
<div class="b" style="left:1247.5px;top:195px;width:30px;height:1px;background:#eeeeee;border-radius:0px;"></div>
<svg class="b" style="left:1254px;top:174px" width="17" height="16"><path d="M2 7.3H14.8M8.4 2.3V13.1" stroke="#111" stroke-width="2.2"/></svg>
<svg class="b" style="left:1254px;top:208px" width="17" height="8"><path d="M2.3 4.1H15" stroke="#222" stroke-width="1.6"/></svg>
<svg class="b" style="left:1849.9px;top:164.0px" width="17.6" height="17.6"><circle cx="8.8" cy="8.8" r="7.8" fill="none" stroke="#8a8a8a" stroke-width="1.1"/><text x="8.8" y="12.5" text-anchor="middle" font-family="Liberation Sans" font-size="10.5" fill="#8a8a8a">?</text></svg>

</body></html>
